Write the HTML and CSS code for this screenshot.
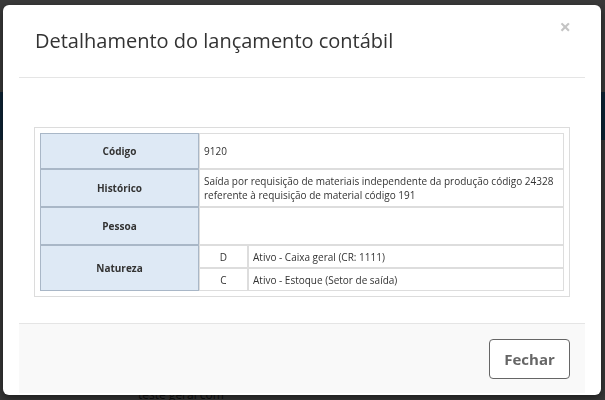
FILE: index.html
```html
<!DOCTYPE html>
<html lang="pt-BR">
<head>
  <meta charset="UTF-8">
  <meta name="viewport" content="width=device-width, initial-scale=1.0">
  <title>Detalhamento do lançamento contábil</title>
  <link rel="stylesheet" href="styles.css">
</head>
<body>
  <div class="page">
    <div class="topbar"></div>
    <div class="navbar"></div>
    <div class="page-content">
      <div class="grid-row"><span>teste geral com</span></div>
    </div>
  </div>

  <div class="backdrop"></div>

  <div class="modal">
    <div class="modal-header">
      <h4 class="modal-title">Detalhamento do lançamento contábil</h4>
      <button class="close" type="button">×</button>
    </div>

    <div class="modal-body">
      <div class="detail-box">
        <table class="detail">
          <tr class="row-1">
            <th>Código</th>
            <td colspan="2">9120</td>
          </tr>
          <tr class="row-2">
            <th>Histórico</th>
            <td colspan="2">Saída por requisição de materiais independente da produção código 24328 referente à requisição de material código 191</td>
          </tr>
          <tr class="row-3">
            <th>Pessoa</th>
            <td colspan="2"></td>
          </tr>
          <tr class="row-sub">
            <th rowspan="2">Natureza</th>
            <td class="nat">D</td>
            <td>Ativo - Caixa geral (CR: 1111)</td>
          </tr>
          <tr class="row-sub">
            <td class="nat">C</td>
            <td>Ativo - Estoque (Setor de saída)</td>
          </tr>
        </table>
      </div>
    </div>

    <div class="modal-footer">
      <button class="btn" type="button">Fechar</button>
    </div>
  </div>
</body>
</html>
```

FILE: styles.css
```css
body {
  margin: 0;
  font-family: 'Open Sans', 'Liberation Sans', sans-serif;
  background-color: #3c3c3c;
  color: #333;
}
.page {
  height: 400px;
  overflow: hidden;
}
.topbar {
  height: 92px;
  background-color: #3d3d3d;
}
.navbar {
  height: 48px;
  background-color: #0e2538;
}
.page-content {
  height: 260px;
  background-color: #3a3a3a;
}
.grid-row {
  padding-top: 246px;
  padding-left: 138px;
  font-size: 12px;
  color: #111;
}
.backdrop {
  position: fixed;
  inset: 0;
  background: rgba(0, 0, 0, 0.05);
}
.modal {
  position: fixed;
  top: 5px;
  left: 3px;
  width: 598px;
  height: 390px;
  box-sizing: border-box;
  padding: 0 16px 2px;
  background: #fff;
  border-radius: 6px;
  box-shadow: 0 3px 9px rgba(0, 0, 0, 0.5);
  display: flex;
  flex-direction: column;
}
.modal-header {
  display: flex;
  align-items: flex-start;
  justify-content: space-between;
  height: 72px;
  border-bottom: 1px solid #e5e5e5;
}
.modal-title {
  margin: 22px 0 0 16px;
  font-size: 20px;
  font-weight: 400;
  line-height: 28px;
  color: #333;
}
.close {
  margin: 12px 14px 0 0;
  padding: 0;
  border: none;
  background: none;
  font-family: 'Open Sans', sans-serif;
  font-size: 20px;
  font-weight: 700;
  line-height: 20px;
  color: #c4c4c4;
}
.modal-body {
  flex: 1;
  padding: 49px 15px 0;
}
.detail-box {
  border: 1px solid #dcdcdc;
  padding: 5px;
}
.detail {
  width: 100%;
  border-collapse: separate;
  border-spacing: 0;
  font-size: 10px;
  line-height: 14px;
}
.detail th,
.detail td {
  border: 1px solid #dddddd;
  padding: 0 4px;
  text-align: left;
  font-weight: 400;
}
.detail th {
  width: 149px;
  background-color: #dee9f5;
  border-color: #a9b7c7;
  text-align: center;
  font-weight: 700;
}
.detail td.nat {
  width: 39px;
  text-align: center;
}
.row-1 th, .row-1 td { height: 34px; }
.row-2 th, .row-2 td { height: 36px; }
.row-3 th, .row-3 td { height: 36px; }
.row-sub td { height: 21px; }
.modal-footer {
  display: flex;
  justify-content: flex-end;
  align-items: flex-start;
  height: 70px;
  box-sizing: border-box;
  padding: 15px 15px 0;
  background-color: #f9f9f9;
  border-top: 1px solid #e5e5e5;
}
.btn {
  width: 81px;
  height: 40px;
  border: 1px solid #666;
  border-radius: 4px;
  background: #fff;
  font-family: 'Open Sans', sans-serif;
  font-size: 15px;
  font-weight: 700;
  color: #666;
}
```
